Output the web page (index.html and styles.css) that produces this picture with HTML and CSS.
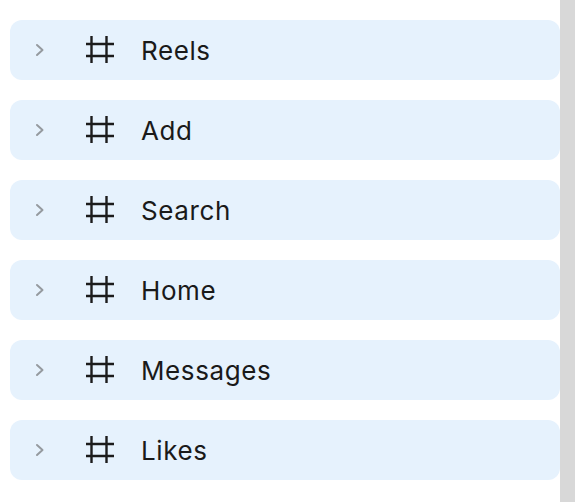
FILE: index.html
```html
<!DOCTYPE html>
<html>
<head>
<meta charset="utf-8">
<link rel="stylesheet" href="styles.css">
</head>
<body>
<div class="page">
  <div class="list">
    <div class="item">
      <svg class="chev" width="16" height="16" viewBox="0 0 16 16"><path d="M5 3 L10.5 8 L5 13" /></svg>
      <svg class="hash" width="28" height="28" viewBox="0 0 28 28"><path d="M5.5 0 V27 M20.5 0 V27 M0 8 H28 M0 20 H28" /></svg>
      <span class="label">Reels</span>
    </div>
    <div class="item">
      <svg class="chev" width="16" height="16" viewBox="0 0 16 16"><path d="M5 3 L10.5 8 L5 13" /></svg>
      <svg class="hash" width="28" height="28" viewBox="0 0 28 28"><path d="M5.5 0 V27 M20.5 0 V27 M0 8 H28 M0 20 H28" /></svg>
      <span class="label">Add</span>
    </div>
    <div class="item">
      <svg class="chev" width="16" height="16" viewBox="0 0 16 16"><path d="M5 3 L10.5 8 L5 13" /></svg>
      <svg class="hash" width="28" height="28" viewBox="0 0 28 28"><path d="M5.5 0 V27 M20.5 0 V27 M0 8 H28 M0 20 H28" /></svg>
      <span class="label">Search</span>
    </div>
    <div class="item">
      <svg class="chev" width="16" height="16" viewBox="0 0 16 16"><path d="M5 3 L10.5 8 L5 13" /></svg>
      <svg class="hash" width="28" height="28" viewBox="0 0 28 28"><path d="M5.5 0 V27 M20.5 0 V27 M0 8 H28 M0 20 H28" /></svg>
      <span class="label">Home</span>
    </div>
    <div class="item">
      <svg class="chev" width="16" height="16" viewBox="0 0 16 16"><path d="M5 3 L10.5 8 L5 13" /></svg>
      <svg class="hash" width="28" height="28" viewBox="0 0 28 28"><path d="M5.5 0 V27 M20.5 0 V27 M0 8 H28 M0 20 H28" /></svg>
      <span class="label">Messages</span>
    </div>
    <div class="item">
      <svg class="chev" width="16" height="16" viewBox="0 0 16 16"><path d="M5 3 L10.5 8 L5 13" /></svg>
      <svg class="hash" width="28" height="28" viewBox="0 0 28 28"><path d="M5.5 0 V27 M20.5 0 V27 M0 8 H28 M0 20 H28" /></svg>
      <span class="label">Likes</span>
    </div>
  </div>
  <div class="scrollbar"></div>
</div>
</body>
</html>
```

FILE: styles.css
```css
html, body {
  margin: 0;
  padding: 0;
  background: #ffffff;
  font-family: Inter, "Noto Sans", sans-serif;
}

.page {
  display: flex;
  width: 580px;
  height: 502px;
  overflow: hidden;
}

.list {
  width: 550px;
  padding: 20px 0 0 10px;
  display: flex;
  flex-direction: column;
  gap: 20px;
}

.item {
  height: 60px;
  background: #e6f2fd;
  border-radius: 12px;
  display: flex;
  align-items: center;
  padding-left: 22px;
}

.chev {
  flex: none;
  fill: none;
  stroke: #959a9f;
  stroke-width: 2;
  stroke-linecap: round;
  stroke-linejoin: round;
}

.hash {
  flex: none;
  margin-left: 38px;
  fill: none;
  stroke: #1c1c1c;
  stroke-width: 2.4;
}

.label {
  margin-left: 27px;
  font-size: 26px;
  color: #1a1a1a;
  letter-spacing: 0.6px;
}

.scrollbar {
  width: 15px;
  height: 502px;
  background: #d8d8d8;
  flex: none;
}
```
